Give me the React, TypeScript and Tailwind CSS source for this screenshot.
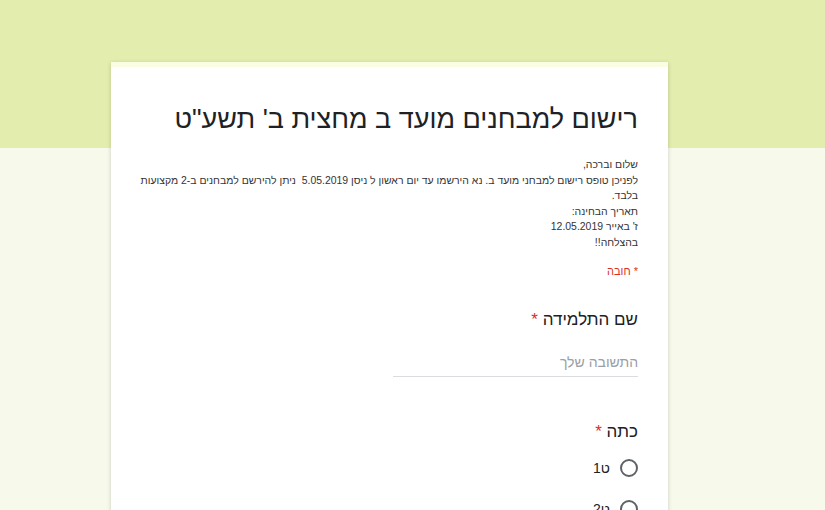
import React from "react";

const font = { fontFamily: '"Liberation Sans", Arial, sans-serif' };

function Radio({ label }: { label: string }) {
    return (
        <div className="flex items-center gap-[10px] h-[41px]">
            <div className="w-[18px] h-[18px] rounded-full border-2 border-[#5f6368] shrink-0" />
            <span className="text-[14px] text-[#202124]">{label}</span>
        </div>
    );
}

export default function App() {
    return (
        <div className="relative w-[825px] h-[510px] overflow-hidden bg-[#f7f9eb]" style={font}>
            <div className="absolute inset-x-0 top-0 h-[148px] bg-[#e3edae]" />
            <div className="relative flex pt-[62px] pl-[111px]">
                <div dir="rtl" className="w-[557px] bg-white shadow-[0_1px_4px_rgba(0,0,0,0.18)]">
                    <div className="h-[5px] bg-[#fafde2]" />
                    <div className="px-[30px] pt-[34px]">
                        <h1 className="text-[27px] leading-[36px] text-[#202124]">
                            רישום למבחנים מועד ב מחצית ב' תשע"ט
                        </h1>
                        <div className="mt-[20px] text-[10.45px] leading-[15.5px] text-[#333]">
                            <div>שלום וברכה,</div>
                            <div className="whitespace-nowrap">
                                לפניכן טופס רישום למבחני מועד ב. נא הירשמו עד יום ראשון ל ניסן 5.05.2019&nbsp;&nbsp;ניתן להירשם למבחנים ב-2 מקצועות
                            </div>
                            <div>בלבד.</div>
                            <div>תאריך הבחינה:</div>
                            <div>ז' באייר 12.05.2019</div>
                            <div>בהצלחה!!</div>
                        </div>
                        <div className="mt-[13px] text-[11px] text-[#d93025]">* חובה</div>

                        <div className="mt-[27px]">
                            <div className="text-[17px] text-[#202124]">
                                שם התלמידה <span className="text-[#d93025]">*</span>
                            </div>
                            <div className="mt-[22px] w-[245px] border-b border-[#dadce0] pb-[6px] text-[14px] leading-[16px] text-[#9aa0a6]">
                                התשובה שלך
                            </div>
                        </div>

                        <div className="mt-[42px]">
                            <div className="text-[17px] text-[#202124]">
                                כתה <span className="text-[#d93025]">*</span>
                            </div>
                            <div className="mt-[3px]">
                                <Radio label="ט1" />
                                <Radio label="ט2" />
                            </div>
                        </div>
                    </div>
                </div>
            </div>
        </div>
    );
}
